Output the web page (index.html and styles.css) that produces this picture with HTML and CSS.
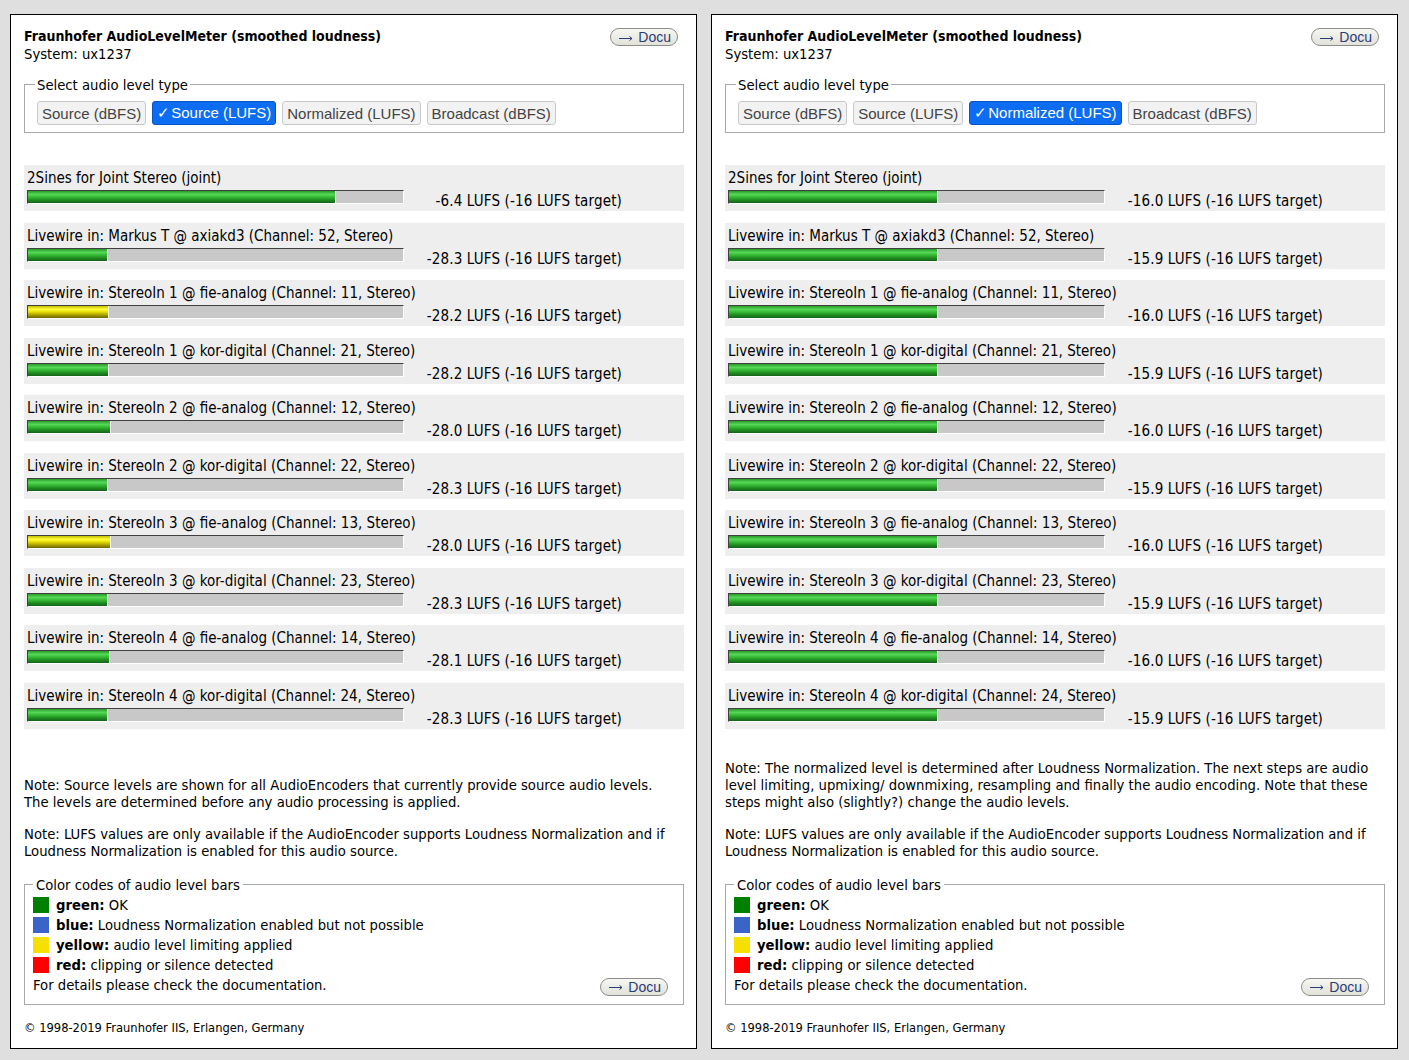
FILE: index.html
```html
<!DOCTYPE html>
<html lang="en">
<head>
    <meta charset="UTF-8">
    <title>Fraunhofer AudioLevelMeter</title>
    <link rel="stylesheet" href="styles.css">
</head>
<body>
    <!-- Left panel: source levels -->
    <div class="panel">
        <div class="header">
            <div>
                <div class="title">Fraunhofer AudioLevelMeter (smoothed loudness)</div>
                <div>System: ux1237</div>
            </div>
            <a class="docu top-docu" href="#"><svg class="arrow" viewBox="0 0 14 8" width="14" height="8"><path d="M0 4.5h13M10.5 2.5l2.5 2-2.5 2"/></svg>Docu</a>
        </div>

        <fieldset class="type-select">
            <legend>Select audio level type</legend>
            <button class="type-btn">Source (dBFS)</button>
            <button class="type-btn active"><span class="check">&#10003;</span>Source (LUFS)</button>
            <button class="type-btn">Normalized (LUFS)</button>
            <button class="type-btn">Broadcast (dBFS)</button>
        </fieldset>

        <div class="levels">
            <div class="level">
                <div class="name">2Sines for Joint Stereo (joint)</div>
                <div class="meter">
                    <div class="bar"><div class="fill green" style="width: 82.2%"></div></div>
                    <div class="value">-6.4 LUFS (-16 LUFS target)</div>
                </div>
            </div>
            <div class="level">
                <div class="name">Livewire in: Markus T @ axiakd3 (Channel: 52, Stereo)</div>
                <div class="meter">
                    <div class="bar"><div class="fill green" style="width: 21.4%"></div></div>
                    <div class="value">-28.3 LUFS (-16 LUFS target)</div>
                </div>
            </div>
            <div class="level">
                <div class="name">Livewire in: StereoIn 1 @ fie-analog (Channel: 11, Stereo)</div>
                <div class="meter">
                    <div class="bar"><div class="fill yellow" style="width: 21.7%"></div></div>
                    <div class="value">-28.2 LUFS (-16 LUFS target)</div>
                </div>
            </div>
            <div class="level">
                <div class="name">Livewire in: StereoIn 1 @ kor-digital (Channel: 21, Stereo)</div>
                <div class="meter">
                    <div class="bar"><div class="fill green" style="width: 21.7%"></div></div>
                    <div class="value">-28.2 LUFS (-16 LUFS target)</div>
                </div>
            </div>
            <div class="level">
                <div class="name">Livewire in: StereoIn 2 @ fie-analog (Channel: 12, Stereo)</div>
                <div class="meter">
                    <div class="bar"><div class="fill green" style="width: 22.2%"></div></div>
                    <div class="value">-28.0 LUFS (-16 LUFS target)</div>
                </div>
            </div>
            <div class="level">
                <div class="name">Livewire in: StereoIn 2 @ kor-digital (Channel: 22, Stereo)</div>
                <div class="meter">
                    <div class="bar"><div class="fill green" style="width: 21.4%"></div></div>
                    <div class="value">-28.3 LUFS (-16 LUFS target)</div>
                </div>
            </div>
            <div class="level">
                <div class="name">Livewire in: StereoIn 3 @ fie-analog (Channel: 13, Stereo)</div>
                <div class="meter">
                    <div class="bar"><div class="fill yellow" style="width: 22.2%"></div></div>
                    <div class="value">-28.0 LUFS (-16 LUFS target)</div>
                </div>
            </div>
            <div class="level">
                <div class="name">Livewire in: StereoIn 3 @ kor-digital (Channel: 23, Stereo)</div>
                <div class="meter">
                    <div class="bar"><div class="fill green" style="width: 21.4%"></div></div>
                    <div class="value">-28.3 LUFS (-16 LUFS target)</div>
                </div>
            </div>
            <div class="level">
                <div class="name">Livewire in: StereoIn 4 @ fie-analog (Channel: 14, Stereo)</div>
                <div class="meter">
                    <div class="bar"><div class="fill green" style="width: 21.9%"></div></div>
                    <div class="value">-28.1 LUFS (-16 LUFS target)</div>
                </div>
            </div>
            <div class="level">
                <div class="name">Livewire in: StereoIn 4 @ kor-digital (Channel: 24, Stereo)</div>
                <div class="meter">
                    <div class="bar"><div class="fill green" style="width: 21.4%"></div></div>
                    <div class="value">-28.3 LUFS (-16 LUFS target)</div>
                </div>
            </div>
        </div>

        <div class="footer">
            <p class="note">Note: Source levels are shown for all AudioEncoders that currently provide source audio levels. The levels are determined before any audio processing is applied.</p>
            <p class="note">Note: LUFS values are only available if the AudioEncoder supports Loudness Normalization and if Loudness Normalization is enabled for this audio source.</p>

            <fieldset class="legend-box">
                <legend>Color codes of audio level bars</legend>
                <div class="code"><span class="swatch sw-green"></span><b>green:</b>&nbsp;OK</div>
                <div class="code"><span class="swatch sw-blue"></span><b>blue:</b>&nbsp;Loudness Normalization enabled but not possible</div>
                <div class="code"><span class="swatch sw-yellow"></span><b>yellow:</b>&nbsp;audio level limiting applied</div>
                <div class="code"><span class="swatch sw-red"></span><b>red:</b>&nbsp;clipping or silence detected</div>
                <div class="details">
                    <span>For details please check the documentation.</span>
                    <a class="docu" href="#"><svg class="arrow" viewBox="0 0 14 8" width="14" height="8"><path d="M0 4.5h13M10.5 2.5l2.5 2-2.5 2"/></svg>Docu</a>
                </div>
            </fieldset>

            <div class="copyright">&copy; 1998-2019 Fraunhofer IIS, Erlangen, Germany</div>
        </div>
    </div>

    <!-- Right panel: normalized levels -->
    <div class="panel">
        <div class="header">
            <div>
                <div class="title">Fraunhofer AudioLevelMeter (smoothed loudness)</div>
                <div>System: ux1237</div>
            </div>
            <a class="docu top-docu" href="#"><svg class="arrow" viewBox="0 0 14 8" width="14" height="8"><path d="M0 4.5h13M10.5 2.5l2.5 2-2.5 2"/></svg>Docu</a>
        </div>

        <fieldset class="type-select">
            <legend>Select audio level type</legend>
            <button class="type-btn">Source (dBFS)</button>
            <button class="type-btn">Source (LUFS)</button>
            <button class="type-btn active"><span class="check">&#10003;</span>Normalized (LUFS)</button>
            <button class="type-btn">Broadcast (dBFS)</button>
        </fieldset>

        <div class="levels">
            <div class="level">
                <div class="name">2Sines for Joint Stereo (joint)</div>
                <div class="meter">
                    <div class="bar"><div class="fill green" style="width: 55.6%"></div></div>
                    <div class="value">-16.0 LUFS (-16 LUFS target)</div>
                </div>
            </div>
            <div class="level">
                <div class="name">Livewire in: Markus T @ axiakd3 (Channel: 52, Stereo)</div>
                <div class="meter">
                    <div class="bar"><div class="fill green" style="width: 55.8%"></div></div>
                    <div class="value">-15.9 LUFS (-16 LUFS target)</div>
                </div>
            </div>
            <div class="level">
                <div class="name">Livewire in: StereoIn 1 @ fie-analog (Channel: 11, Stereo)</div>
                <div class="meter">
                    <div class="bar"><div class="fill green" style="width: 55.6%"></div></div>
                    <div class="value">-16.0 LUFS (-16 LUFS target)</div>
                </div>
            </div>
            <div class="level">
                <div class="name">Livewire in: StereoIn 1 @ kor-digital (Channel: 21, Stereo)</div>
                <div class="meter">
                    <div class="bar"><div class="fill green" style="width: 55.8%"></div></div>
                    <div class="value">-15.9 LUFS (-16 LUFS target)</div>
                </div>
            </div>
            <div class="level">
                <div class="name">Livewire in: StereoIn 2 @ fie-analog (Channel: 12, Stereo)</div>
                <div class="meter">
                    <div class="bar"><div class="fill green" style="width: 55.6%"></div></div>
                    <div class="value">-16.0 LUFS (-16 LUFS target)</div>
                </div>
            </div>
            <div class="level">
                <div class="name">Livewire in: StereoIn 2 @ kor-digital (Channel: 22, Stereo)</div>
                <div class="meter">
                    <div class="bar"><div class="fill green" style="width: 55.8%"></div></div>
                    <div class="value">-15.9 LUFS (-16 LUFS target)</div>
                </div>
            </div>
            <div class="level">
                <div class="name">Livewire in: StereoIn 3 @ fie-analog (Channel: 13, Stereo)</div>
                <div class="meter">
                    <div class="bar"><div class="fill green" style="width: 55.6%"></div></div>
                    <div class="value">-16.0 LUFS (-16 LUFS target)</div>
                </div>
            </div>
            <div class="level">
                <div class="name">Livewire in: StereoIn 3 @ kor-digital (Channel: 23, Stereo)</div>
                <div class="meter">
                    <div class="bar"><div class="fill green" style="width: 55.8%"></div></div>
                    <div class="value">-15.9 LUFS (-16 LUFS target)</div>
                </div>
            </div>
            <div class="level">
                <div class="name">Livewire in: StereoIn 4 @ fie-analog (Channel: 14, Stereo)</div>
                <div class="meter">
                    <div class="bar"><div class="fill green" style="width: 55.6%"></div></div>
                    <div class="value">-16.0 LUFS (-16 LUFS target)</div>
                </div>
            </div>
            <div class="level">
                <div class="name">Livewire in: StereoIn 4 @ kor-digital (Channel: 24, Stereo)</div>
                <div class="meter">
                    <div class="bar"><div class="fill green" style="width: 55.8%"></div></div>
                    <div class="value">-15.9 LUFS (-16 LUFS target)</div>
                </div>
            </div>
        </div>

        <div class="footer">
            <p class="note">Note: The normalized level is determined after Loudness Normalization. The next steps are audio level limiting, upmixing/ downmixing, resampling and finally the audio encoding. Note that these steps might also (slightly?) change the audio levels.</p>
            <p class="note">Note: LUFS values are only available if the AudioEncoder supports Loudness Normalization and if Loudness Normalization is enabled for this audio source.</p>

            <fieldset class="legend-box">
                <legend>Color codes of audio level bars</legend>
                <div class="code"><span class="swatch sw-green"></span><b>green:</b>&nbsp;OK</div>
                <div class="code"><span class="swatch sw-blue"></span><b>blue:</b>&nbsp;Loudness Normalization enabled but not possible</div>
                <div class="code"><span class="swatch sw-yellow"></span><b>yellow:</b>&nbsp;audio level limiting applied</div>
                <div class="code"><span class="swatch sw-red"></span><b>red:</b>&nbsp;clipping or silence detected</div>
                <div class="details">
                    <span>For details please check the documentation.</span>
                    <a class="docu" href="#"><svg class="arrow" viewBox="0 0 14 8" width="14" height="8"><path d="M0 4.5h13M10.5 2.5l2.5 2-2.5 2"/></svg>Docu</a>
                </div>
            </fieldset>

            <div class="copyright">&copy; 1998-2019 Fraunhofer IIS, Erlangen, Germany</div>
        </div>
    </div>
</body>
</html>
```
FILE: styles.css
```css
/* General styling */

body {
    font-family: "DejaVu Sans Condensed", "DejaVu Sans", sans-serif;
    font-size: 14.7px;
    line-height: 17px;
    color: #000;
    background-color: #dfdfdf;
    margin: 0;
    padding: 14px 11px 12px 10px;
    display: flex;
    gap: 14px;
    align-items: stretch;
}

/* One meter page */
.panel {
    width: 687px;
    box-sizing: border-box;
    background-color: #fff;
    border: 1px solid #000;
    padding: 13px 12px 13px 13px;
    display: flex;
    flex-direction: column;
}

.header {
    display: flex;
    justify-content: space-between;
    align-items: flex-start;
}

.title {
    font-weight: bold;
    font-size: 14px;
}

/* Pill shaped documentation link */
.docu {
    display: inline-flex;
    align-items: center;
    font-family: "Liberation Sans", Arial, sans-serif;
    font-size: 14px;
    line-height: 16px;
    color: #2c3c78;
    text-decoration: none;
    padding: 0 6px 0 7px;
    border: 1px solid #8c8c8c;
    border-radius: 9px;
    background: linear-gradient(#f7f7f3, #e2e2da);
}

.docu .arrow {
    margin: 1px 5px 0 1px;
    fill: none;
    stroke: currentColor;
    stroke-width: 1;
}

.top-docu {
    margin-right: 6px;
}

/* Level type selection */
fieldset {
    margin: 0;
    border: 1px solid #a8a8a8;
}

fieldset legend {
    padding: 0 2px;
    margin-left: -2px;
}

.type-select {
    margin-top: 14px;
    padding: 8px 12px 7px;
    display: flex;
    gap: 6px;
}

.type-btn {
    font-family: "Liberation Sans", Arial, sans-serif;
    font-size: 15px;
    height: 24px;
    padding: 0 4px;
    color: #444;
    background-color: #f2f2f2;
    border: 1px solid #c9c9c9;
    border-radius: 3px;
    cursor: pointer;
}

.type-btn.active {
    color: #fff;
    background-color: #0c6cf2;
    border-color: #0a55c4;
}

.check {
    margin-right: 1px;
}

/* Level rows */
.levels {
    margin-top: 32px;
    display: flex;
    flex-direction: column;
    gap: 11.5px;
}

.level {
    background-color: #eee;
    padding: 5px 3px 0;
    height: 46px;
    box-sizing: border-box;
    font-size: 15px;
}

.meter {
    display: flex;
    margin-top: 3px;
}

.bar {
    width: 377px;
    height: 14px;
    box-sizing: border-box;
    background-color: #c8c8c8;
    border-top: 1px solid #404040;
    border-left: 1px solid #404040;
    border-bottom: 1px solid #fff;
    border-right: 1px solid #fff;
}

.fill {
    height: 100%;
    box-sizing: border-box;
    border-right: 1px solid #fff;
}

.fill.green {
    background: linear-gradient(#279a27 0%, #58d858 28%, #36bb36 50%, #1f8c1f 75%, #14621a 100%);
}

.fill.yellow {
    background: linear-gradient(#c6be00 0%, #ffff3a 28%, #e6dc00 50%, #a89e00 75%, #6c6400 100%);
}

.value {
    width: 218px;
    text-align: right;
    margin-top: 3px;
    letter-spacing: 0.15px;
}

/* Notes and colour legend */
.footer {
    margin-top: auto;
    padding-top: 30px;
}

.note {
    margin: 0 5px 15px 0;
}

.legend-box {
    margin-top: 17px;
    padding: 2px 8px 8px;
}

.legend-box legend {
    padding: 0 3px;
    margin-left: 0;
}

.code {
    display: flex;
    align-items: center;
    height: 20px;
}

.code b {
    margin-left: 7px;
}

.swatch {
    width: 16px;
    height: 16px;
}

.sw-green { background-color: #008000; }
.sw-blue { background-color: #3a64c8; }
.sw-yellow { background-color: #f6e000; }
.sw-red { background-color: #ff0000; }

.details {
    display: flex;
    justify-content: space-between;
    align-items: flex-start;
    margin-top: 1px;
}

.details .docu {
    margin-top: 2px;
    margin-right: 7px;
}

.copyright {
    margin-top: 15px;
    font-size: 12.8px;
    line-height: 15px;
}
```
